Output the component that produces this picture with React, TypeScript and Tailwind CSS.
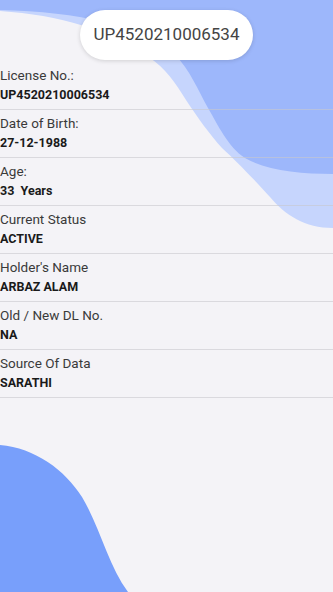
import React from 'react';

const rows = [
  { label: 'License No.:', value: 'UP4520210006534' },
  { label: 'Date of Birth:', value: '27-12-1988' },
  { label: 'Age:', value: '33  Years' },
  { label: 'Current Status', value: 'ACTIVE' },
  { label: "Holder's Name", value: 'ARBAZ ALAM' },
  { label: 'Old / New DL No.', value: 'NA' },
  { label: 'Source Of Data', value: 'SARATHI' },
];

const Waves = () => (
  <svg className="absolute inset-0" width="333" height="592" viewBox="0 0 333 592">
    <path
      d="M0,0 H333 V228 C305,228 285,215 270,197 C250,175 235,160 222,148 C210,135 198,118 186,100 C175,82 165,68 150,58 C110,30 60,15 0,11 Z"
      fill="#c6d5fd"
    />
    <path
      d="M0,0 H333 V174 C300,174 265,170 245,158 C228,147 218,125 208,108 C198,90 190,70 175,55 C140,25 80,12 0,10 Z"
      fill="#9db7fb"
    />
    <path d="M0,445 C35,448 65,470 82,497 C100,527 108,565 128,592 H0 Z" fill="#789ffb" />
  </svg>
);

export default function App() {
  return (
    <div className="relative w-[333px] h-[592px] overflow-hidden bg-[#f4f3f7] font-['Roboto',sans-serif]">
      <Waves />
      <div className="relative flex flex-col pt-[10px]">
        <div className="mx-auto flex h-[50px] w-[173px] items-center justify-center rounded-full bg-white shadow-[0_1px_4px_rgba(0,0,0,0.15)]">
          <span className="text-[17px] text-[#444]">UP4520210006534</span>
        </div>
        <div className="mt-[2px] flex flex-col">
          {rows.map((r) => (
            <div key={r.label} className="flex flex-col border-b border-[rgba(200,200,205,0.6)] pt-[4px] pb-[6px]">
              <span className="text-[13.5px] leading-[18px] text-[#3a3a3a]">{r.label}</span>
              <span className="mt-[3px] whitespace-pre text-[12.5px] font-bold leading-[16px] text-[#1a1a1a]">{r.value}</span>
            </div>
          ))}
        </div>
      </div>
    </div>
  );
}
